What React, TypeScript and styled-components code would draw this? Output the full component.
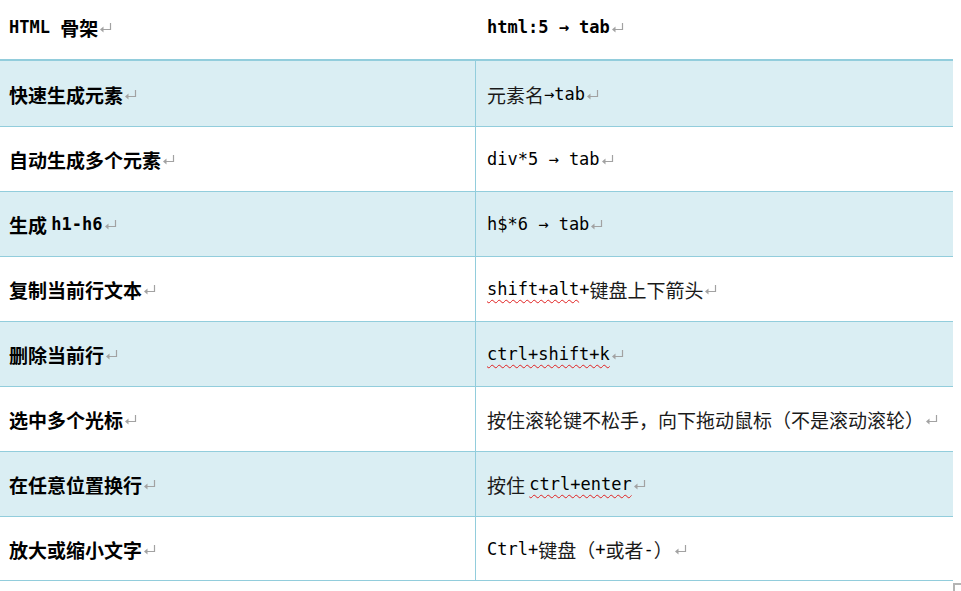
import React from "react";
import styled, { createGlobalStyle } from "styled-components";

const GlobalStyle = createGlobalStyle`
  html, body {
    margin: 0;
    padding: 0;
    background: #ffffff;
  }
  body {
    font-family: "Noto Sans CJK SC", "DejaVu Sans", sans-serif;
    color: #000;
  }
`;

const BORDER = "#92cddc";
const SHADE = "#daeef3";

const Page = styled.div`
  width: 961px;
  height: 591px;
  overflow: hidden;
  display: flex;
  flex-direction: column;
`;

const Table = styled.div`
  width: 953px;
  display: flex;
  flex-direction: column;
`;

const HeaderRow = styled.div`
  display: grid;
  grid-template-columns: 476px 477px;
  height: 59px;
  border-bottom: 2px solid ${BORDER};
  background: #fff;
`;

const Row = styled.div<{ $shaded: boolean; $h: number }>`
  display: grid;
  grid-template-columns: 476px 477px;
  height: ${(p) => p.$h}px;
  border-bottom: 1px solid ${BORDER};
  background: ${(p) => (p.$shaded ? SHADE : "#fff")};
`;

const Cell = styled.div<{ $side: "left" | "right"; $header?: boolean }>`
  box-sizing: border-box;
  display: flex;
  align-items: center;
  white-space: pre;
  padding-left: ${(p) => (p.$side === "left" ? "9px" : "11px")};
  padding-top: ${(p) => (p.$header ? "0" : "1px")};
  padding-bottom: ${(p) => (p.$header ? "5px" : "0")};
  border-right: ${(p) =>
    p.$side === "left" && !p.$header ? `1px solid ${BORDER}` : "none"};
  font-size: 19px;
  line-height: 1;
`;

const Cjk = styled.span<{ $bold?: boolean }>`
  font-family: "Noto Sans CJK SC", sans-serif;
  font-weight: ${(p) => (p.$bold ? 700 : 400)};
  font-size: 19px;
  color: ${(p) => (p.$bold ? "#000" : "#1a1a1a")};
`;

const Mono = styled.span<{ $bold?: boolean; $spell?: boolean }>`
  font-family: "DejaVu Sans Mono", "Liberation Mono", monospace;
  font-weight: ${(p) => (p.$bold ? 700 : 400)};
  font-size: 17px;
  color: #000;
  text-decoration: ${(p) => (p.$spell ? "underline wavy #e02020" : "none")};
  text-decoration-thickness: 1px;
  text-underline-offset: 4px;
  text-decoration-skip-ink: none;
`;

const MarkSvg = styled.svg`
  display: block;
  flex: none;
  margin-left: 1px;
`;

const ReturnMark: React.FC = () => (
  <MarkSvg width="13" height="11" viewBox="0 0 13 11" aria-hidden>
    <path
      d="M11.5 1 V7.5 H2"
      fill="none"
      stroke="#a2a2a2"
      strokeWidth="1.2"
    />
    <path d="M1 7.5 L4.5 4.5 V10.5 Z" fill="#a2a2a2" />
  </MarkSvg>
);

const Corner = styled.div`
  margin-left: 953px;
  margin-top: 2px;
  width: 8px;
  height: 9px;
  border-top: 2px solid #b4b4b4;
  border-left: 2px solid #b4b4b4;
`;

type Seg = { t: string; k: "cjk" | "cjkB" | "mono" | "monoB" | "spell" };

const Segs: React.FC<{ segs: Seg[] }> = ({ segs }) => (
  <>
    {segs.map((s, i) => {
      if (s.k === "cjk") return <Cjk key={i}>{s.t}</Cjk>;
      if (s.k === "cjkB") return <Cjk key={i} $bold>{s.t}</Cjk>;
      if (s.k === "monoB") return <Mono key={i} $bold>{s.t}</Mono>;
      if (s.k === "spell") return <Mono key={i} $spell>{s.t}</Mono>;
      return <Mono key={i}>{s.t}</Mono>;
    })}
    <ReturnMark />
  </>
);

const rows: { left: Seg[]; right: Seg[]; h: number }[] = [
  {
    h: 65,
    left: [{ t: "快速生成元素", k: "cjkB" }],
    right: [
      { t: "元素名", k: "cjk" },
      { t: "→tab", k: "mono" },
    ],
  },
  {
    h: 64,
    left: [{ t: "自动生成多个元素", k: "cjkB" }],
    right: [{ t: "div*5 → tab", k: "mono" }],
  },
  {
    h: 64,
    left: [
      { t: "生成 ", k: "cjkB" },
      { t: "h1-h6", k: "monoB" },
    ],
    right: [{ t: "h$*6 → tab", k: "mono" }],
  },
  {
    h: 64,
    left: [{ t: "复制当前行文本", k: "cjkB" }],
    right: [
      { t: "shift+alt", k: "spell" },
      { t: "+", k: "mono" },
      { t: "键盘上下箭头", k: "cjk" },
    ],
  },
  {
    h: 64,
    left: [{ t: "删除当前行", k: "cjkB" }],
    right: [{ t: "ctrl+shift+k", k: "spell" }],
  },
  {
    h: 64,
    left: [{ t: "选中多个光标", k: "cjkB" }],
    right: [{ t: "按住滚轮键不松手，向下拖动鼠标（不是滚动滚轮）", k: "cjk" }],
  },
  {
    h: 64,
    left: [{ t: "在任意位置换行", k: "cjkB" }],
    right: [
      { t: "按住 ", k: "cjk" },
      { t: "ctrl+enter", k: "spell" },
    ],
  },
  {
    h: 63,
    left: [{ t: "放大或缩小文字", k: "cjkB" }],
    right: [
      { t: "Ctrl+", k: "mono" },
      { t: "键盘（", k: "cjk" },
      { t: "+", k: "mono" },
      { t: "或者", k: "cjk" },
      { t: "-", k: "mono" },
      { t: "）", k: "cjk" },
    ],
  },
];

export default function App() {
  return (
    <Page>
      <GlobalStyle />
      <Table>
        <HeaderRow>
          <Cell $side="left" $header>
            <Segs
              segs={[
                { t: "HTML ", k: "monoB" },
                { t: "骨架", k: "cjkB" },
              ]}
            />
          </Cell>
          <Cell $side="right" $header>
            <Segs segs={[{ t: "html:5 → tab", k: "monoB" }]} />
          </Cell>
        </HeaderRow>
        {rows.map((r, i) => (
          <Row key={i} $shaded={i % 2 === 0} $h={r.h}>
            <Cell $side="left">
              <Segs segs={r.left} />
            </Cell>
            <Cell $side="right">
              <Segs segs={r.right} />
            </Cell>
          </Row>
        ))}
      </Table>
      <Corner />
    </Page>
  );
}
